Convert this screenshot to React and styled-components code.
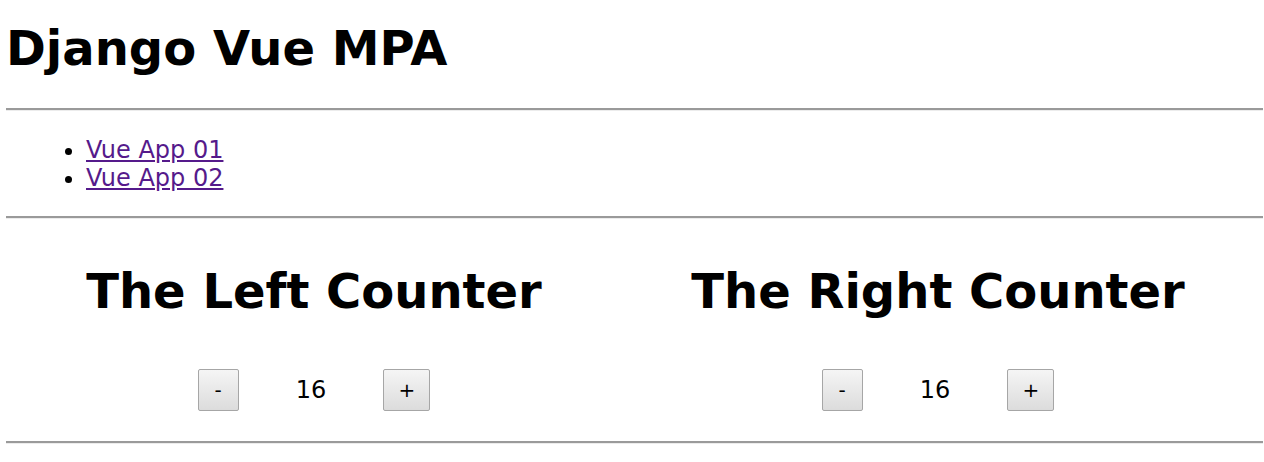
import React, { useState } from 'react';
import styled, { createGlobalStyle } from 'styled-components';

const GlobalStyle = createGlobalStyle`
  body {
    margin: 0 1px 0 6px;
    font-family: "DejaVu Sans", "Liberation Sans", sans-serif;
    background: #fff;
    color: #000;
  }
`;

const Title = styled.h1`
  margin: 20px 0 32px 0;
  font-size: 48px;
  line-height: 56px;
  font-weight: 700;
`;

const Rule = styled.hr`
  margin: 0;
  height: 0;
  border: none;
  border-top: 2px solid #9a9a9a;
  border-bottom: 1px solid #ececec;
`;

const NavList = styled.ul`
  margin: 25px 0 24px 0;
  padding-left: 80px;
  font-size: 24px;
  line-height: 28px;
`;

const NavLink = styled.a`
  color: #551a8b;
  text-decoration: underline;
`;

const Counters = styled.div`
  display: grid;
  grid-template-columns: 616px 632px;
  padding: 44px 0 30px 0;
`;

const CounterBox = styled.section`
  display: flex;
  flex-direction: column;
  align-items: center;
`;

const CounterTitle = styled.h2`
  margin: 0 0 50px 0;
  font-size: 48px;
  line-height: 56px;
  font-weight: 700;
  white-space: nowrap;
`;

const Controls = styled.div`
  display: flex;
  align-items: center;
  gap: 57px;
`;

const StepButton = styled.button`
  width: ${({ $w }) => $w}px;
  height: 42px;
  padding: 0;
  border: 1px solid #a6a6a6;
  border-radius: 2px;
  background: linear-gradient(#f5f5f5, #dcdcdc);
  font-family: "DejaVu Sans", sans-serif;
  font-size: 20px;
  color: #000;
  cursor: pointer;
`;

const Value = styled.span`
  font-size: 24px;
  line-height: 28px;
`;

const Counter = ({ title }) => {
  const [count, setCount] = useState(16);

  return (
    <CounterBox>
      <CounterTitle>{title}</CounterTitle>
      <Controls>
        <StepButton $w={41} onClick={() => setCount(count - 1)}>-</StepButton>
        <Value>{count}</Value>
        <StepButton $w={47} onClick={() => setCount(count + 1)}>+</StepButton>
      </Controls>
    </CounterBox>
  );
};

const App = () => (
  <>
    <GlobalStyle />
    <Title>Django Vue MPA</Title>
    <Rule />
    <NavList>
      <li><NavLink href="#app01">Vue App 01</NavLink></li>
      <li><NavLink href="#app02">Vue App 02</NavLink></li>
    </NavList>
    <Rule />
    <Counters>
      <Counter title="The Left Counter" />
      <Counter title="The Right Counter" />
    </Counters>
    <Rule />
  </>
);

export default App;
